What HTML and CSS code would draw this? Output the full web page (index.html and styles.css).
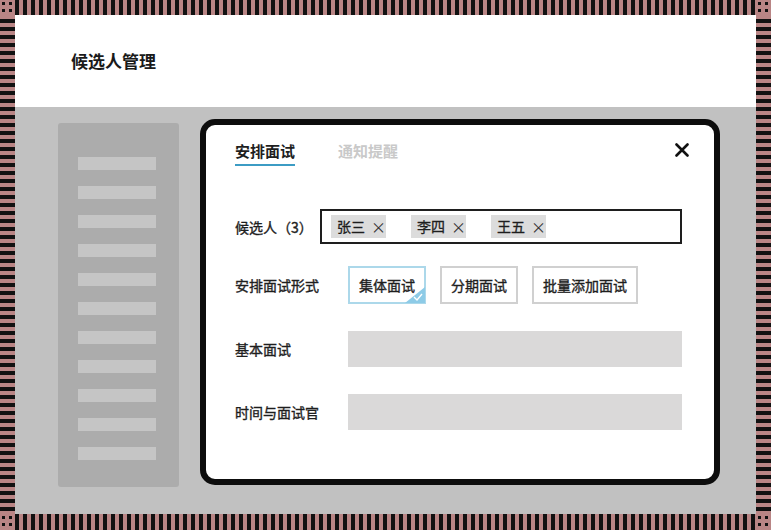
FILE: index.html
```html
<!DOCTYPE html>
<html lang="zh-CN">
<head>
    <meta charset="UTF-8">
    <meta name="viewport" content="width=device-width, initial-scale=1.0">
    <title>候选人管理</title>
    <link rel="stylesheet" href="styles.css">
</head>
<body>
    <div class="frame">
        <div class="corner"></div>
        <div class="edge-h"></div>
        <div class="corner"></div>
        <div class="edge-v"></div>
        <div class="main">
            <div class="header">候选人管理</div>
            <div class="content">
                <div class="sidebar">
                    <div class="side-bar"></div>
                    <div class="side-bar"></div>
                    <div class="side-bar"></div>
                    <div class="side-bar"></div>
                    <div class="side-bar"></div>
                    <div class="side-bar"></div>
                    <div class="side-bar"></div>
                    <div class="side-bar"></div>
                    <div class="side-bar"></div>
                    <div class="side-bar"></div>
                    <div class="side-bar"></div>
                </div>
                <div class="modal">
                    <div class="modal-top">
                        <div class="tabs">
                            <div class="tab active">安排面试</div>
                            <div class="tab">通知提醒</div>
                        </div>
                        <svg class="close" width="14" height="14" viewBox="0 0 14 14">
                            <path d="M1.5 1.5 L12.5 12.5 M12.5 1.5 L1.5 12.5" stroke="#111" stroke-width="2.6" stroke-linecap="round"/>
                        </svg>
                    </div>
                    <div class="row row-candidates">
                        <div class="label label-short">候选人（3）</div>
                        <div class="tag-input">
                            <span class="tag">张三<span class="tag-x">×</span></span>
                            <span class="tag">李四<span class="tag-x">×</span></span>
                            <span class="tag">王五<span class="tag-x">×</span></span>
                        </div>
                    </div>
                    <div class="row row-type">
                        <div class="label">安排面试形式</div>
                        <div class="options">
                            <div class="option selected">集体面试
                                <svg class="option-mark" width="20" height="16" viewBox="0 0 20 16">
                                    <path d="M20 0 L20 16 L0 16 Z" fill="#8dcbe7"/>
                                    <path d="M9 10 L12 13 L17 7" fill="none" stroke="#fff" stroke-width="1.4"/>
                                </svg>
                            </div>
                            <div class="option">分期面试</div>
                            <div class="option">批量添加面试</div>
                        </div>
                    </div>
                    <div class="row row-field">
                        <div class="label">基本面试</div>
                        <div class="field"></div>
                    </div>
                    <div class="row row-field">
                        <div class="label">时间与面试官</div>
                        <div class="field"></div>
                    </div>
                </div>
            </div>
        </div>
        <div class="edge-v"></div>
        <div class="corner"></div>
        <div class="edge-h"></div>
        <div class="corner"></div>
    </div>
</body>
</html>
```

FILE: styles.css
```css
body {
    margin: 0;
    padding: 0;
    font-family: "Noto Sans CJK SC", "Noto Sans", sans-serif;
    color: #1e1e1e;
}
.frame {
    display: grid;
    grid-template-columns: 15px 1fr 15px;
    grid-template-rows: 15px 1fr 16px;
    width: 771px;
    height: 530px;
}
.corner {
    background-color: #b98585;
    background-image: radial-gradient(circle, #111 1.5px, transparent 2px);
    background-size: 7px 7px;
}
.edge-h {
    background: repeating-linear-gradient(90deg, #111 0 4px, #b98585 4px 8px);
}
.edge-v {
    background: repeating-linear-gradient(180deg, #b98585 0 4px, #111 4px 8px);
}
.main {
    display: flex;
    flex-direction: column;
    min-height: 0;
}
.header {
    height: 92px;
    flex-shrink: 0;
    background-color: #ffffff;
    display: flex;
    align-items: center;
    padding-left: 56px;
    padding-bottom: 2px;
    box-sizing: border-box;
    font-size: 17px;
    font-weight: bold;
    color: #1a1a1a;
}
.content {
    flex: 1;
    background-color: #c1c1c1;
    display: flex;
    align-items: flex-start;
    padding: 12px 0 0 43px;
}
.sidebar {
    width: 121px;
    height: 364px;
    margin-top: 4px;
    background-color: #acacac;
    border-radius: 3px;
    box-sizing: border-box;
    padding: 34px 0 0 20px;
    display: flex;
    flex-direction: column;
    gap: 16px;
}
.side-bar {
    width: 78px;
    height: 13px;
    background-color: #c5c5c5;
}
.modal {
    width: 520px;
    height: 366px;
    margin-left: 21px;
    box-sizing: border-box;
    border: 6px solid #0d0d0d;
    border-radius: 15px;
    background-color: #ffffff;
    padding: 0 31px 0 29px;
}
.modal-top {
    display: flex;
    justify-content: space-between;
    align-items: flex-start;
    padding-top: 15px;
}
.tabs {
    display: flex;
    gap: 43px;
}
.tab {
    font-size: 15px;
    line-height: 21px;
    font-weight: bold;
    color: #c9c9c9;
    padding-bottom: 3px;
    border-bottom: 2px solid transparent;
}
.tab.active {
    color: #1e1e1e;
    border-bottom-color: #3c9cc4;
}
.close {
    margin-top: 3px;
    margin-right: -6px;
}
.row {
    display: flex;
    align-items: center;
}
.label {
    width: 113px;
    flex-shrink: 0;
    font-size: 14px;
    color: #1e1e1e;
    -webkit-text-stroke: 0.35px #1e1e1e;
}
.label-short {
    width: 85px;
}
.row-candidates {
    margin-top: 43px;
}
.tag-input {
    width: 362px;
    height: 35px;
    box-sizing: border-box;
    border: 2px solid #1e1e1e;
    display: flex;
    align-items: center;
    gap: 25px;
    padding-left: 9px;
}
.tag {
    width: 55px;
    height: 23px;
    box-sizing: border-box;
    background-color: #dcdcdc;
    font-size: 14px;
    line-height: 23px;
    padding-left: 6px;
    display: flex;
    align-items: center;
    color: #1e1e1e;
    -webkit-text-stroke: 0.3px #1e1e1e;
}
.tag-x {
    margin-left: 6px;
    font-size: 15px;
    color: #333;
    -webkit-text-stroke: 0;
}
.row-type {
    margin-top: 22px;
}
.options {
    display: flex;
    gap: 14px;
}
.option {
    position: relative;
    height: 38px;
    box-sizing: border-box;
    border: 2px solid #d0d0d0;
    padding: 0 9px;
    display: flex;
    align-items: center;
    font-size: 14px;
    color: #1e1e1e;
    -webkit-text-stroke: 0.35px #1e1e1e;
}
.option.selected {
    border-color: #acd8ea;
}
.option-mark {
    position: absolute;
    right: -1px;
    bottom: -1px;
}
.row-field {
    margin-top: 27px;
}
.field {
    width: 334px;
    height: 36px;
    background-color: #dad9d9;
}
```
